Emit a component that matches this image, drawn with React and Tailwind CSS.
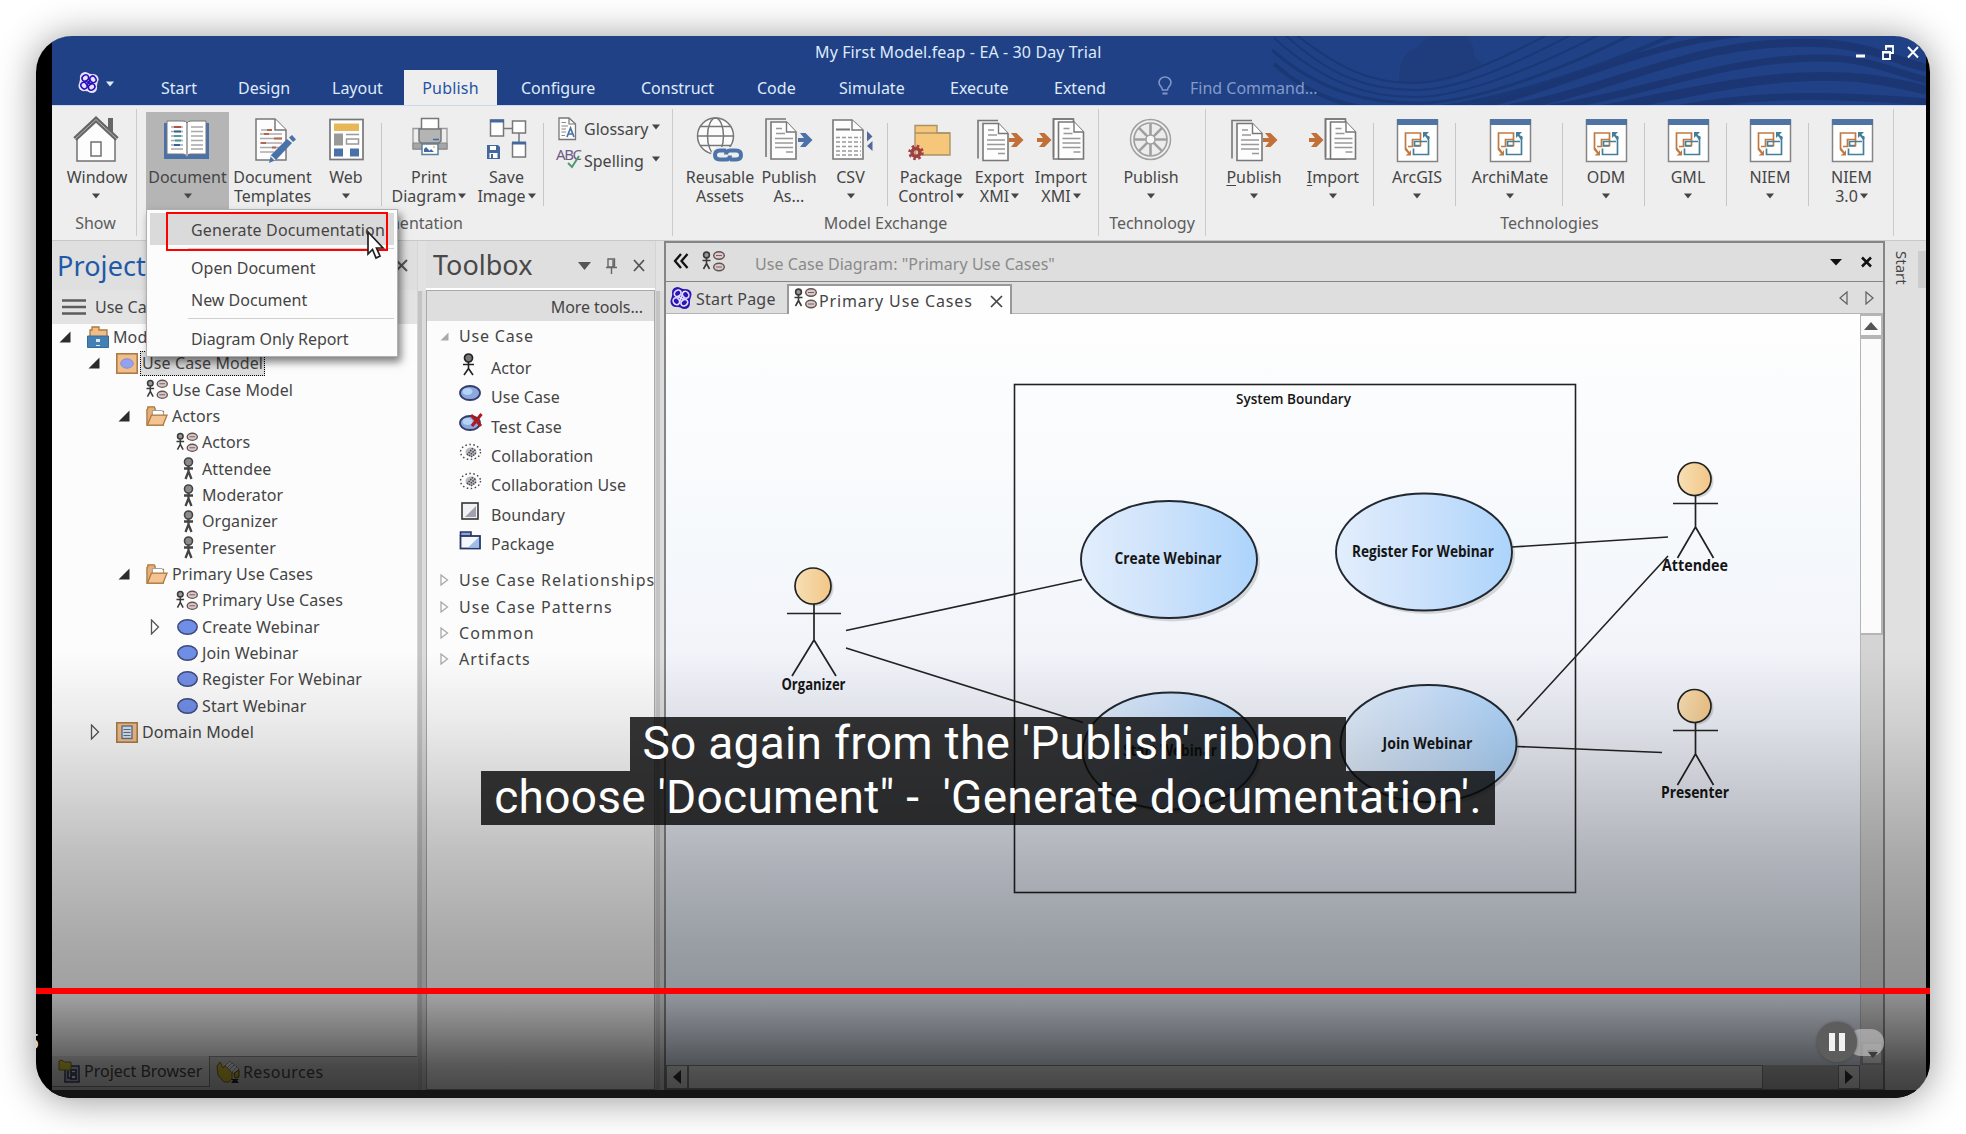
import React from "react";

/* ---------- small shared glyphs ---------- */

const Caret = ({ className = "" }) => (
  <svg className={className} width="8" height="6" viewBox="0 0 8 6">
    <path d="M0 0.5H8L4 5.5Z" fill="currentColor" />
  </svg>
);

const Logo = ({ size, fill, stroke }) => (
  <svg width={size} height={size} viewBox="0 0 24 24">
    <circle cx="8.500" cy="6.500" r="5.500" fill={fill} />
    <circle cx="17" cy="8.500" r="5.500" fill={fill} />
    <circle cx="15.500" cy="17.500" r="5.500" fill={fill} />
    <circle cx="7" cy="15.500" r="5.500" fill={fill} />
    <circle cx="12" cy="12" r="9.500" fill={fill} />
    <g fill="none" stroke={stroke} strokeWidth="1.600">
      <ellipse cx="8.700" cy="7.300" rx="3.600" ry="3" transform="rotate(-35 8.700 7.300)" />
      <ellipse cx="16.700" cy="8.700" rx="3" ry="3.600" transform="rotate(-35 16.700 8.700)" />
      <ellipse cx="15.300" cy="16.700" rx="3.600" ry="3" transform="rotate(-35 15.300 16.700)" />
      <ellipse cx="7.300" cy="15.300" rx="3" ry="3.600" transform="rotate(-35 7.300 15.300)" />
      <path d="M8 11C11 10 13 14 16 13M13 8C14 11 10 13 11 16" />
    </g>
  </svg>
);

const Icon = ({ children }) => (
  <svg width="48" height="48" viewBox="0 0 48 48" className="shrink-0 overflow-visible">
    {children}
  </svg>
);

/* ---------- ribbon icons (48 x 48 grid) ---------- */

const WindowIcon = () => (
  <Icon>
    <path d="M38.500 3V21" stroke="#666" strokeWidth="5" />
    <path d="M5 23L24 5L43 23V46H5Z" fill="#fdfdfd" stroke="#707070" strokeWidth="1.500" />
    <path d="M3 24L24 4.500L45 24" fill="none" stroke="#666" strokeWidth="5" />
    <path d="M3 24L24 4.500L45 24" fill="none" stroke="#b5b5b5" strokeWidth="1" />
    <rect x="19" y="27" width="10" height="14" fill="#fff" stroke="#707070" strokeWidth="1.500" />
  </Icon>
);

const BookIcon = () => (
  <Icon>
    <path d="M0 8H45V44H0Z" fill="#4a72a8" />
    <path d="M3 6H19Q22 6 23 8Q24 6 27 6H42V39H26Q23.500 39 23 42Q22 39 19 39H3Z" fill="#fff" stroke="#777" strokeWidth="1" />
    <path d="M23 8V41" stroke="#aaa" strokeWidth="2" />
    <path d="M7 12H19M7 21H19M7 34H19M27 12H39M27 16.500H39M27 21H39M27 25.500H39M27 30H39M27 34H39" stroke="#a8a8a8" strokeWidth="1.500" />
    <path d="M7 16.500H19M7 25.500H19M7 30H19" stroke="#9ab" strokeWidth="1.500" />
    <path d="M10 12H17" stroke="#b5523c" strokeWidth="2" />
    <path d="M10 16.500H17M10 30H16" stroke="#3e5f96" strokeWidth="2" />
    <path d="M10 21H17M11 25.500H17" stroke="#4f9a9a" strokeWidth="2" />
  </Icon>
);

const TemplateIcon = () => (
  <Icon>
    <g transform="translate(3 0)">
      <path d="M4 4H23L34 15V45H4Z" fill="#fdfdfd" stroke="#777" strokeWidth="1.500" />
      <path d="M23 4V15H34" fill="#fff" stroke="#777" strokeWidth="1.500" />
      <path d="M9 15H18M8 19H30M8 23.500H30M8 28H30M8 32.500H28M8 37H22" stroke="#aaa" strokeWidth="1.500" />
      <path d="M15 15H20M12 19H17M22 23.500H30M9 28H14M20 32.500H24" stroke="#b8654a" strokeWidth="1.800" />
      <path d="M17 48L19 40L35 24L40 28L24 45Z" fill="#4a72a8" />
      <path d="M37 22.500L40 20L44 24.500L41 27Z" fill="#4a72a8" />
      <path d="M19 41L23 45" stroke="#e6eefa" strokeWidth="1.500" />
    </g>
  </Icon>
);

const WebIcon = () => (
  <Icon>
    <rect x="8" y="4.500" width="33" height="40" fill="#fff" stroke="#777" strokeWidth="1.700" />
    <rect x="12" y="8.500" width="25" height="7.500" fill="#e8b757" />
    <rect x="12" y="18.500" width="9" height="12" fill="#999" />
    <path d="M24 19.500H37" stroke="#999" strokeWidth="1.500" />
    <rect x="24.500" y="24" width="12" height="5" fill="#fff" stroke="#999" strokeWidth="1.500" />
    <rect x="12" y="33.500" width="9" height="8" fill="#4a72a8" />
    <rect x="28" y="33.500" width="9" height="8" fill="#4a72a8" />
  </Icon>
);

const PrintIcon = () => (
  <Icon>
    <g transform="translate(1 0)">
      <path d="M7 13.500H41V34H7Z" fill="#ededed" stroke="#999" strokeWidth="1.300" />
      <path d="M7 28H41V34H7Z" fill="#a6a6a6" stroke="#888" />
      <rect x="15.500" y="3.500" width="17" height="11" fill="#fff" stroke="#777" strokeWidth="1.500" />
      <path d="M13 14H35V26L33 28H15L13 26Z" fill="#b4b4b4" stroke="#777" strokeWidth="1.500" />
      <path d="M27 24.500H33" stroke="#44699f" strokeWidth="1.500" />
      <rect x="16" y="29" width="16" height="10.500" fill="#fff" stroke="#5e8098" strokeWidth="1.500" />
      <path d="M18 37V34L20 32L25 37ZM25 34L28 37H23Z" fill="#44699f" />
      <circle cx="28" cy="32" r="1" fill="#e8b757" />
    </g>
  </Icon>
);

const SaveImageIcon = () => (
  <Icon>
    <path d="M21 13.500H31M36 18V28" stroke="#777" strokeWidth="1.500" fill="none" />
    <rect x="7.500" y="5" width="13" height="16" fill="#fff" stroke="#777" strokeWidth="1.500" />
    <path d="M7 6H21" stroke="#44699f" strokeWidth="3" />
    <rect x="29.500" y="6" width="13" height="12" fill="#fff" stroke="#777" strokeWidth="1.500" />
    <rect x="29.500" y="28" width="13" height="14" fill="#fff" stroke="#777" strokeWidth="1.500" />
    <path d="M29 28H43" stroke="#44699f" strokeWidth="3" />
    <path d="M4 30H15L17 32V44H4Z" fill="#44699f" />
    <rect x="7" y="31" width="6" height="4" fill="#fff" />
    <rect x="6.500" y="38" width="8" height="5" fill="#fff" />
    <rect x="8" y="39" width="2" height="4" fill="#44699f" />
  </Icon>
);

const GlobeIcon = () => (
  <Icon>
    <g fill="none" stroke="#777" strokeWidth="1.500">
      <circle cx="19.500" cy="21" r="18" fill="#fbfbfb" />
      <ellipse cx="19.500" cy="21" rx="8" ry="18" />
      <path d="M1.500 21H37.500M4.500 11.500H34.500M4.500 30.500H34.500" />
    </g>
    <rect x="15" y="32" width="34" height="16" rx="8" fill="#eee" />
    <g fill="none" stroke="#4c74a9" strokeWidth="4">
      <path d="M30 35.500H24Q19 35.500 19 40T24 44.500H30Q34 44.500 34 40.500" />
      <path d="M34 44.500H40Q45 44.500 45 40T40 35.500H34Q30 35.500 30 39.500" />
    </g>
  </Icon>
);

const PagesArt = () => (
  <g>
    <path d="M1 41V3H21" fill="none" stroke="#777" strokeWidth="1.600" />
    <path d="M6 6H21.500L31 16V43H6Z" fill="#fdfdfd" stroke="#777" strokeWidth="1.600" />
    <path d="M21.500 6V16H31" fill="#fff" stroke="#777" strokeWidth="1.400" />
    <path d="M11 12.500H17M11 17.500H20M10 22.500H28M10 27H28M10 31.500H28M21 36H28" stroke="#999" strokeWidth="1.500" />
  </g>
);

const Arrow = ({ fill }) => (
  <path d="M0 5H6L2 0H7.500L14.500 7L7.500 14H2L6 9H0Z" fill={fill} />
);

const PublishAsIcon = () => (
  <Icon>
    <g transform="translate(0 1)"><PagesArt /></g>
    <g transform="translate(33 18)"><Arrow fill="#4a72a8" /></g>
  </Icon>
);

const ExportIcon = () => (
  <Icon>
    <g transform="translate(1 2.500)"><PagesArt /></g>
    <g transform="translate(33 18)"><Arrow fill="#c2703a" /></g>
  </Icon>
);

const ImportIcon = () => (
  <Icon>
    <g transform="translate(0 18)"><Arrow fill="#c2703a" /></g>
    <g transform="translate(15.500 1)">
      <path d="M1 43V3H21V43Z" fill="#fdfdfd" stroke="#777" strokeWidth="1.600" />
      <PagesArt />
    </g>
  </Icon>
);

const CsvIcon = () => (
  <Icon>
    <g transform="translate(1 0)">
      <path d="M5 5H24L35 15V44H5Z" fill="#fdfdfd" stroke="#777" strokeWidth="1.600" />
      <path d="M24 5V15H35" fill="#fff" stroke="#777" strokeWidth="1.400" />
      <path d="M8 14.500H22" stroke="#777" strokeWidth="1.800" />
      <path d="M8 22.500H33M8 27H33M8 31.500H33M8 36H33M8 40H33" stroke="#999" strokeWidth="1.500" strokeDasharray="4 2" />
      <path d="M39 16L44.500 21.500L39 26.500ZM44.500 26V36L39 31Z" fill="#52699b" />
    </g>
  </Icon>
);

const PackageIcon = () => (
  <Icon>
    <path d="M8 40V10.500H30V18H43V40Z" fill="#f6c67a" stroke="#a89468" strokeWidth="1.400" />
    <path d="M8 18H43" stroke="#a89468" strokeWidth="1.400" />
    <circle cx="9" cy="37.500" r="4" fill="none" stroke="#a04045" strokeWidth="3.500" />
    <circle cx="9" cy="37.500" r="6.500" fill="none" stroke="#a04045" strokeWidth="2.500" strokeDasharray="2.550 2.550" />
  </Icon>
);

const WheelIcon = () => (
  <Icon>
    <circle cx="23.500" cy="24.500" r="20" fill="#efefef" stroke="#a0a0a0" strokeWidth="1.500" />
    <circle cx="23.500" cy="24.500" r="16.500" fill="#ececec" stroke="#a0a0a0" strokeWidth="1.700" />
    <path d="M23.500 8.500V40.500M7.500 24.500H39.500M12.200 13.200L34.800 35.800M34.800 13.200L12.200 35.800" stroke="#a0a0a0" strokeWidth="2.600" />
    <circle cx="23.500" cy="24.500" r="4.500" fill="#f6f6f6" stroke="#a0a0a0" strokeWidth="1.500" />
  </Icon>
);

const TechIcon = () => (
  <Icon>
    <rect x="4.500" y="5" width="40" height="41.500" fill="#fff" stroke="#858585" strokeWidth="1.500" />
    <path d="M4 4H45V10H4Z" fill="#4f74a3" />
    <path d="M12.500 34V18H27.500V24M15 31.500H19.500V24.500H27.500V30.500H21.500" fill="none" stroke="#c07a41" strokeWidth="1.700" />
    <path d="M35.500 21V39.500H20.500V33.500M34 26.500H21.500V31H27.500" fill="none" stroke="#437f9b" strokeWidth="1.700" />
    <path d="M36 17H30V23L32 21L35 25L37 23L33.500 19.500Z" fill="#437f9b" />
    <path d="M12.500 40.500H18V35L16.500 37L13.500 33L11.500 34.500L15 38.500Z" fill="#c07a41" />
  </Icon>
);

const GlossaryIcon = () => (
  <svg width="19" height="24" viewBox="0 0 19 24">
    <path d="M1 1H11L17.500 7V22.500H1Z" fill="#fdfdfd" stroke="#777" strokeWidth="1.300" />
    <path d="M11 1V7H17.500" fill="none" stroke="#777" strokeWidth="1.200" />
    <path d="M3.500 5.500H8M3.500 9H10M3.500 12H8M3.500 15H8M3.500 18.500H7" stroke="#888" strokeWidth="1.200" />
    <path d="M9 20L12.500 11L16 20M10 17H15" fill="none" stroke="#4a72a8" strokeWidth="1.700" />
  </svg>
);

/* ---------- ribbon building blocks ---------- */

const Item = ({ icon, a, b, caret, w, active, underline }) => (
  <div className={`flex h-[103px] shrink-0 flex-col items-center pt-[3px] ${w} ${active ? "bg-[#b5b5b5]" : ""}`}>
    {icon}
    <div className="mt-[5px] whitespace-nowrap text-center leading-[19px]">
      {underline ? <span><span className="underline underline-offset-2">{a[0]}</span>{a.slice(1)}</span> : a}
    </div>
    <div className="flex h-[19px] items-center whitespace-nowrap leading-[19px]">
      {b}
      {caret && <Caret className={b ? "mb-[2px] ml-[2px]" : "mb-px"} />}
    </div>
  </div>
);

const Sep = () => <div className="mt-[11px] h-[83px] w-px shrink-0 bg-[#c6c6c6]" />;

const Group = ({ w, pl = "", label, children }) => (
  <div className={`mt-[3px] flex h-[127px] shrink-0 flex-col border-r border-[#cbcbcb] ${w}`}>
    <div className={`flex pt-[3px] ${pl}`}>{children}</div>
    <div className="-mt-[2px] text-center leading-[20px] text-[#5c5c5c]">{label}</div>
  </div>
);

const Ribbon = () => (
  <div className="flex h-[136px] border-b border-t border-b-[#c8c8c8] border-t-[#c9d8f5] bg-[#eeeeee] text-[#454545]">
    <Group w="w-[85px]" label={<span className="pl-[3px]">Show</span>}>
      <Item w="w-[88px]" icon={<WindowIcon />} a={<span className="pl-[2px]">Window</span>} caret />
    </Group>
    <Group w="w-[536px]" pl="pl-[9px]" label="Documentation">
      <Item w="w-[83px]" icon={<BookIcon />} a="Document" caret active />
      <Item w="w-[87px]" icon={<TemplateIcon />} a="Document" b="Templates" />
      <Item w="w-[60px]" icon={<WebIcon />} a="Web" caret />
      <div className="w-[5px]" />
      <Sep />
      <Item w="w-[94px]" icon={<PrintIcon />} a="Print" b="Diagram" caret />
      <Item w="w-[61px]" icon={<SaveImageIcon />} a="Save" b="Image" caret />
      <div className="w-[6px]" />
      <Sep />
      <div className="flex w-[120px] flex-col pl-[12px]">
        <div className="flex h-[33px] items-center">
          <div className="w-[28px] pl-[2px]"><GlossaryIcon /></div>
          <span className="w-[66px]">Glossary</span>
          <Caret className="mb-[4px] ml-[2px]" />
        </div>
        <div className="flex h-[31px] items-center">
          <div className="relative w-[28px] text-[15px] leading-[15px] tracking-[-1.400px] text-[#6f5c86]">
            <span className="relative -top-[6px]">ABC</span>
            <svg className="absolute left-[11px] top-[2px]" width="14" height="14" viewBox="0 0 14 14">
              <path d="M1 8L5 12L12 1" fill="none" stroke="#4d9a72" strokeWidth="2" />
            </svg>
          </div>
          <span className="w-[66px]">Spelling</span>
          <Caret className="mb-[4px] ml-[2px]" />
        </div>
      </div>
    </Group>
    <Group w="w-[426px]" pl="pl-[3px]" label="Model Exchange">
      <Item w="w-[88px]" icon={<GlobeIcon />} a="Reusable" b="Assets" />
      <Item w="w-[50px]" icon={<PublishAsIcon />} a="Publish" b="As..." />
      <Item w="w-[73px]" icon={<CsvIcon />} a="CSV" caret />
      <Sep />
      <Item w="w-[86px]" icon={<PackageIcon />} a="Package" b="Control" caret />
      <Item w="w-[51px]" icon={<ExportIcon />} a="Export" b="XMI" caret />
      <Item w="w-[72px]" icon={<ImportIcon />} a="Import" b="XMI" caret />
    </Group>
    <Group w="w-[107px]" label="Technology">
      <Item w="w-[104px]" icon={<WheelIcon />} a="Publish" caret />
    </Group>
    <Group w="w-[688px]" pl="pl-[8px]" label="Technologies">
      <Item w="w-[80px]" icon={<ExportIcon />} a="Publish" caret underline />
      <Item w="w-[78px]" icon={<ImportIcon />} a="Import" caret underline />
      <div className="w-px" />
      <Sep />
      <Item w="w-[81px] pl-[5px]" icon={<TechIcon />} a="ArcGIS" caret />
      <Sep />
      <Item w="w-[106px] pl-[2px]" icon={<TechIcon />} a="ArchiMate" caret />
      <Sep />
      <Item w="w-[81px] pl-[5px]" icon={<TechIcon />} a="ODM" caret />
      <Sep />
      <Item w="w-[81px] pl-[5px]" icon={<TechIcon />} a="GML" caret />
      <Sep />
      <Item w="w-[81px] pl-[5px]" icon={<TechIcon />} a="NIEM" caret />
      <Sep />
      <Item w="w-[84px] pl-[1px]" icon={<TechIcon />} a="NIEM" b="3.0" caret />
    </Group>
  </div>
);

/* ---------- title bar and ribbon tabs ---------- */

const tabs = [
  ["Start", "w-[77px]"],
  ["Design", "w-[94px]"],
  ["Layout", "w-[72px]"],
];
const tabsAfter = [
  ["Configure", "w-[120px]"],
  ["Construct", "w-[116px]"],
  ["Code", "w-[82px]"],
  ["Simulate", "w-[111px]"],
  ["Execute", "w-[104px]"],
  ["Extend", "w-[104px]"],
];

const Waves = () => (
  <svg className="absolute right-0 top-0" width="690" height="69" viewBox="1236 36 690 69">
    <path d="M1399 82C1399 66 1404 50 1416 48C1422 44 1425 36 1436 36H1466C1472 40 1474 50 1474 56C1478 60 1482 62 1482 66C1460 80 1430 86 1399 82Z" fill="#1f3c7c" />
    <g fill="none" stroke="#1b3876" strokeWidth="2">
      <path d="M1290 30C1340 70 1370 82 1410 83S1500 60 1556 30" />
      <path d="M1280 30C1330 78 1370 90 1415 90S1520 62 1580 30" />
      <path d="M1274 38C1325 84 1370 98 1418 97S1540 66 1608 30" />
      <path d="M1272 50C1320 92 1370 104 1422 103S1560 72 1640 30" strokeWidth="3" />
      <path d="M1274 64C1310 96 1350 112 1410 110S1580 78 1680 32" strokeWidth="4" />
    </g>
    <g fill="none" stroke="#1b3673" strokeWidth="6">
      <path d="M1470 108C1560 90 1640 44 1740 34" />
      <path d="M1510 108C1600 92 1680 50 1770 44S1880 56 1926 68" strokeWidth="8" />
      <path d="M1550 108C1640 94 1700 68 1780 60S1880 68 1926 80" strokeWidth="7" />
      <path d="M1600 110C1680 94 1740 80 1800 77S1890 82 1926 90" strokeWidth="9" />
      <path d="M1660 112C1740 96 1800 92 1926 102" strokeWidth="7" />
    </g>
  </svg>
);

const TitleBar = () => (
  <div className="relative h-[69px] bg-[#204186] text-[#dfeafb]">
    <Waves />
    <div className="relative flex h-[34px] items-center">
      <div className="w-[763px]" />
      <div className="w-[1040px] leading-[34px] tracking-[0.120px]"><span className="relative -top-px">My First Model.feap - EA - 30 Day Trial</span></div>
      <div className="flex items-center text-white">
        <svg width="66" height="16" viewBox="0 0 66 16" className="-mt-[3px]">
          <path d="M1 12H10" stroke="#fff" strokeWidth="3" />
          <path d="M31 6V2H38V9H35M30 2.500H38" fill="none" stroke="#fff" strokeWidth="1.800" />
          <path d="M28 8H35V15H28ZM27 8.500H36" fill="none" stroke="#fff" strokeWidth="1.800" />
          <path d="M53 3L63 13.500M63 3L53 13.500" stroke="#fff" strokeWidth="2" />
        </svg>
      </div>
    </div>
    <div className="relative flex h-[35px] items-center leading-[36px]">
      <div className="flex w-[109px] items-center pl-[25px]">
        <div className="-mt-[10px]"><Logo size={23} fill="#e8e2ff" stroke="#2a10b8" /></div>
        <Caret className="-mt-[8px] ml-[6px]" />
      </div>
      {tabs.map(([t, w]) => <div key={t} className={`${w} shrink-0`}>{t}</div>)}
      <div className="flex h-[35px] w-[93px] items-center justify-center bg-[#eeeeee] text-[#1f55a5]">
        <span className="tracking-[0.2px]">Publish</span>
      </div>
      <div className="w-[24px]" />
      {tabsAfter.map(([t, w]) => <div key={t} className={`${w} shrink-0`}>{t}</div>)}
      <svg width="14" height="20" viewBox="0 0 14 20" className="-mt-[4px]">
        <path d="M4.500 14C4.500 11 1 10 1 6.500A6 5.500 0 0 1 13 6.500C13 10 9.500 11 9.500 14Z" fill="none" stroke="#7f97c8" strokeWidth="1.600" />
        <path d="M4.500 17.500H9.500" stroke="#7f97c8" strokeWidth="2" />
      </svg>
      <span className="ml-[18px] text-[#829bca]">Find Command...</span>
    </div>
  </div>
);

/* ---------- project tree ---------- */

const Person = ({ x = 0 }) => (
  <g transform={`translate(${x} 0)`} stroke="#444" fill="none">
    <path d="M5.500 9V15M1 11.500H10M5.500 14.500L2.500 22M5.500 14.500L8.500 22" strokeWidth="2.300" />
    <circle cx="5.500" cy="5" r="4" fill="#8b8b8b" strokeWidth="1.600" />
  </g>
);

const DiagramGlyph = () => (
  <svg width="23" height="21" viewBox="0 0 23 21">
    <g stroke="#3a3a3a" fill="none" strokeWidth="1.600">
      <path d="M4.500 7V13M0.500 9.500H8.500M4.500 12.500L1.500 18M4.500 12.500L7.500 18" />
      <circle cx="4.500" cy="4" r="2.900" fill="#999" />
      <ellipse cx="17" cy="4.500" rx="5.300" ry="3.700" fill="#dcc8c8" stroke="#5e5252" strokeWidth="1.400" />
      <ellipse cx="17" cy="16" rx="5.300" ry="3.700" fill="#dcc8c8" stroke="#5e5252" strokeWidth="1.400" />
      <path d="M14 4.500H20M14 16H20" stroke="#7a6262" strokeWidth="1.200" />
    </g>
  </svg>
);

const FolderGlyph = () => (
  <svg width="24" height="22" viewBox="0 0 24 22">
    <path d="M1 21V4L2 3V1H9L10 3V6H19V21Z" fill="#e6ae78" stroke="#a9793f" strokeWidth="1.400" />
    <path d="M7 12V5H17L19 7V12Z" fill="#fff" stroke="#999" strokeWidth="1" />
    <path d="M1.500 21L6 10H23L18.500 21Z" fill="#f4c391" stroke="#a9793f" strokeWidth="1.400" />
  </svg>
);

const RootGlyph = () => (
  <svg width="22" height="22" viewBox="0 0 22 22">
    <path d="M3 11V4H5V1H12V4H20V11Z" fill="#efbd85" stroke="#a9793f" strokeWidth="1.300" />
    <path d="M0.500 10H21.500V21.500H0.500Z" fill="#4480b4" stroke="#356a9b" />
    <path d="M9 13H13V16H9Z" fill="#dbe9f5" />
    <path d="M9 19.500H13" stroke="#dbe9f5" />
  </svg>
);

const PackageView = ({ doc }) => (
  <svg width="22" height="21" viewBox="0 0 22 21">
    <rect x="0.800" y="0.800" width="20.400" height="19.400" fill="#f2bd8b" stroke="#aa7c48" strokeWidth="1.600" />
    {doc ? (
      <g><rect x="6" y="4" width="10" height="12.500" fill="#d5e2ee" stroke="#5b6f88" strokeWidth="1.300" /><path d="M7.500 7.500H14.500M7.500 10.500H14.500M7.500 13.500H14.500" stroke="#5b6f88" /></g>
    ) : (
      <ellipse cx="11" cy="10.500" rx="6.300" ry="4.700" fill="#93a2ee" stroke="#8290cc" />
    )}
  </svg>
);

const Oval = () => (
  <svg width="21" height="16" viewBox="0 0 21 16">
    <ellipse cx="10.500" cy="8" rx="9.700" ry="7.200" fill="#718ee6" stroke="#3d4a7c" strokeWidth="1.500" />
  </svg>
);

const ActorGlyph = () => (
  <svg width="21" height="23" viewBox="0 0 21 23"><Person x={6} /></svg>
);

const Open = () => (
  <svg width="12" height="12" viewBox="0 0 12 12"><path d="M11.500 0.500V11.500H0.500Z" fill="#2c2c2c" /></svg>
);
const Closed = () => (
  <svg width="10" height="16" viewBox="0 0 10 16" className="ml-[2px]"><path d="M1.500 1L8.500 8L1.500 15Z" fill="#fff" stroke="#555" strokeWidth="1.300" /></svg>
);

const glyphs = {
  root: <RootGlyph />,
  view: <PackageView />,
  doc: <PackageView doc />,
  diagram: <DiagramGlyph />,
  folder: <FolderGlyph />,
  actor: <ActorGlyph />,
  oval: <Oval />,
};

const indents = ["pl-[7px]", "pl-[36px]", "pl-[66px]", "pl-[96px]"];

const tree = [
  [0, "root", "Model", "open"],
  [1, "view", "Use Case Model", "open", true],
  [2, "diagram", "Use Case Model"],
  [2, "folder", "Actors", "open"],
  [3, "diagram", "Actors"],
  [3, "actor", "Attendee"],
  [3, "actor", "Moderator"],
  [3, "actor", "Organizer"],
  [3, "actor", "Presenter"],
  [2, "folder", "Primary Use Cases", "open"],
  [3, "diagram", "Primary Use Cases"],
  [3, "oval", "Create Webinar", "closed"],
  [3, "oval", "Join Webinar"],
  [3, "oval", "Register For Webinar"],
  [3, "oval", "Start Webinar"],
  [1, "doc", "Domain Model", "closed"],
];

const ProjectPanel = () => (
  <div className="flex w-[365px] shrink-0 flex-col bg-[#fcfcfc]">
    <div className="flex h-[49px] items-center bg-[#dfdfdf] pl-[5px]">
      <span className="w-[338px] text-[27px] leading-[48px] tracking-[0.1px] text-[#2159a8]">Project Browser</span>
      <svg width="13" height="13" viewBox="0 0 13 13"><path d="M1 1L12 12M12 1L1 12" stroke="#555" strokeWidth="2" /></svg>
    </div>
    <div className="flex h-[34px] items-center bg-[#e3e3e3] pl-[10px]">
      <svg width="24" height="16" viewBox="0 0 24 16"><path d="M0 1.500H24M0 8H24M0 14.500H24" stroke="#5c5c5c" strokeWidth="2.500" /></svg>
      <span className="ml-[9px] w-[242px]">Use Case Model</span>
      <svg width="20" height="20" viewBox="0 0 20 20"><path d="M10 0H14V10H20L12 19L4 10H10Z" fill="#1f5a45" /></svg>
    </div>
    <div className="flex flex-1 flex-col">
      {tree.map(([lvl, g, text, state, sel], i) => (
        <div key={i} className={`flex h-[26.330px] shrink-0 items-center ${indents[lvl]}`}>
          <div className="flex w-[16px] shrink-0 justify-start">
            {state === "open" && <Open />}
            {state === "closed" && <Closed />}
          </div>
          <div className="ml-[12px] flex w-[22px] shrink-0 justify-center">{glyphs[g]}</div>
          <span className={sel ? "ml-[2px] border border-dotted border-black bg-[#dcdcdc] px-px leading-[23px] tracking-[0.100px]" : "ml-[4px] leading-[26px] tracking-[0.100px]"}>{text}</span>
        </div>
      ))}
    </div>
    <div className="flex h-[34px] shrink-0 bg-[#d2d2d2]">
      <div className="flex h-[31px] w-[158px] items-center border-b border-r border-[#888] bg-[#e4e4e4] pl-[6px]">
        <svg width="23" height="24" viewBox="0 0 23 24">
          <rect x="7" y="7" width="14" height="16" fill="#b9bfd8" stroke="#3c4266" strokeWidth="1.500" />
          <path d="M10 12V19H13M13 11H18V14H13ZM13 16H18V20H13Z" fill="#fff" stroke="#2c3152" strokeWidth="1.500" />
          <path d="M1 2L4 1L6 3H13V11H1Z" fill="#d9cf3c" stroke="#7a7420" />
        </svg>
        <span className="ml-[3px]">Project Browser</span>
      </div>
      <div className="flex h-[31px] flex-1 items-center border-t border-[#999] pl-[6px]">
        <svg width="25" height="24" viewBox="0 0 25 24">
          <path d="M1 6L4 2L7 8L9 6L16 12V19L13 22H8L2 15Z" fill="#d8c22e" stroke="#75691c" />
          <path d="M9 6L14 1L23 9L18 14Z" fill="#f2f2f2" stroke="#777" strokeDasharray="2 1" />
          <path d="M11 8L16 3M13 10L18 5M16 12L21 7" stroke="#999" />
          <path d="M18 13L23 10V17L19 18Z" fill="#c9b42c" stroke="#5c521b" />
          <path d="M15 19H23L21 20.500L23 23H15L17 20.500Z" fill="#222" />
        </svg>
        <span className="ml-[2px] tracking-[0.400px]">Resources</span>
      </div>
    </div>
  </div>
);

/* ---------- toolbox ---------- */

const BlueOval = ({ cross }) => (
  <svg width="23" height="22" viewBox="0 0 23 22" className="-mt-[3px] overflow-visible">
    <ellipse cx="11" cy="11" rx="10" ry="7" fill="#8ca8e0" stroke="#343c6a" strokeWidth="1.800" />
    <ellipse cx="8.500" cy="9.500" rx="5" ry="3.500" fill="#b5d3f2" />
    {cross && <path d="M12 3L22 14M22.500 2L13 14" stroke="#b0181c" strokeWidth="3" />}
  </svg>
);

const Collab = () => (
  <svg width="23" height="22" viewBox="0 0 23 22" className="-mt-[2px]">
    <ellipse cx="11.500" cy="10" rx="10" ry="7.500" fill="none" stroke="#444" strokeWidth="1.400" strokeDasharray="1.500 2.500" />
    <ellipse cx="12" cy="10" rx="5.500" ry="4.500" fill="#b9b9c2" />
    <path d="M8 13L14 6M10 14L17 7M12 15L17 11" stroke="#444" strokeWidth="1.500" strokeDasharray="1.500 1" />
  </svg>
);

const toolItems = [
  ["Actor", <svg width="23" height="23" viewBox="0 0 23 23" key="a" className="-mt-[3px]"><g stroke="#222" fill="none"><path d="M9.500 9V16M4 11.500H15M9.500 15.500L5 22M9.500 15.500L14 22" strokeWidth="1.600" /><circle cx="9.500" cy="5" r="4" fill="#777" strokeWidth="1.700" /></g></svg>],
  ["Use Case", <BlueOval key="b" />],
  ["Test Case", <BlueOval cross key="c" />],
  ["Collaboration", <Collab key="d" />],
  ["Collaboration Use", <Collab key="e" />],
  ["Boundary", <svg width="23" height="22" viewBox="0 0 23 22" key="f" className="-mt-px"><rect x="3" y="2" width="16" height="16" fill="#f2f2f4" stroke="#333" strokeWidth="1.600" /><path d="M17 5V16H6Z" fill="#a2a2ae" /></svg>],
  ["Package", <svg width="23" height="22" viewBox="0 0 23 22" key="g" className="-mt-px"><path d="M1.500 6V2H12V6" fill="#8ba6d5" stroke="#2a3665" strokeWidth="1.600" /><rect x="1.500" y="6" width="19.500" height="12.500" fill="#f4f8fe" stroke="#2a3665" strokeWidth="1.800" /><path d="M20 7V17.500H9Z" fill="#9dbdec" /></svg>],
];

const Toolbox = () => (
  <div className="flex w-[229px] shrink-0 flex-col border-b border-[#999] bg-[#dfdfdf]">
    <div className="flex h-[47px] shrink-0 items-center pl-[7px]">
      <span className="w-[144px] text-[27px] leading-[46px] text-[#484848]">Toolbox</span>
      <svg width="70" height="16" viewBox="0 0 70 16" className="mt-[2px]">
        <path d="M1 4H14L7.500 12Z" fill="#555" />
        <path d="M31 1H37.500V9H31ZM29 9.500H40M34.500 10V16M36 2V9" fill="none" stroke="#666" strokeWidth="1.400" />
        <path d="M57 2L67 13M67 2L57 13" stroke="#555" strokeWidth="1.800" />
      </svg>
    </div>
    <div className="h-[2px] shrink-0 bg-white" />
    <div className="flex flex-1 flex-col border border-b-0 border-[#a9a9a9] bg-[#fcfcfc]">
      <div className="h-[30px] shrink-0 bg-[#dedede] pr-[11px] text-right leading-[32px] tracking-[-0.100px]">More tools...</div>
      <div className="flex h-[30px] shrink-0 items-center pl-[13px]">
        <svg width="9" height="9" viewBox="0 0 9 9"><path d="M8.500 0.500V8.500H0.500Z" fill="#aaa" /></svg>
        <span className="ml-[10px] tracking-[0.800px] leading-[28px]">Use Case</span>
      </div>
      {toolItems.map(([t, g]) => (
        <div key={t} className="flex h-[29.300px] shrink-0 items-center pl-[32px]">
          {g}
          <span className="ml-[9px] pt-[5px] leading-[24px] tracking-[0.080px]">{t}</span>
        </div>
      ))}
      <div className="h-[11px] shrink-0" />
      {["Use Case Relationships", "Use Case Patterns", "Common", "Artifacts"].map((t) => (
        <div key={t} className="flex h-[26.300px] shrink-0 items-center overflow-hidden pl-[13px]">
          <svg className="shrink-0" width="9" height="12" viewBox="0 0 9 12"><path d="M1 1L7.500 6L1 11Z" fill="none" stroke="#aaa" strokeWidth="1.300" /></svg>
          <span className="ml-[10px] whitespace-nowrap leading-[26px] tracking-[1.050px]">{t}</span>
        </div>
      ))}
    </div>
  </div>
);

/* ---------- diagram ---------- */

const Label = ({ x, y, w, size = 16, weight = 700, children }) => (
  <text x={x} y={y} fontSize={size} fontWeight={weight} textLength={w} lengthAdjust="spacingAndGlyphs" textAnchor="middle" fill="#151515" fontFamily="'Open Sans', 'Noto Sans', sans-serif">
    {children}
  </text>
);

const UseCase = ({ cx, cy, w, label, ly }) => (
  <g>
    <ellipse cx={cx + 3} cy={cy + 3} rx="88" ry="59" fill="#000" opacity="0.130" />
    <ellipse cx={cx} cy={cy} rx="88" ry="58.500" fill="url(#uc)" stroke="#222831" strokeWidth="1.900" />
    <Label x={cx - 1} y={ly} w={w}>{label}</Label>
  </g>
);

const Actor = ({ x, top, r, arm, bodyTop, armY, hip, foot, leg, label, w, ly }) => (
  <g stroke="#222" strokeWidth="1.700" fill="none">
    <circle cx={x + 1.500} cy={top + r + 2} r={r} fill="#000" opacity="0.150" stroke="none" />
    <circle cx={x - 1} cy={top + r} r={r} fill="url(#head)" />
    <path d={`M${x} ${bodyTop}V${hip}M${x - arm} ${armY}H${x + arm}M${x} ${hip}L${x - leg} ${foot}M${x} ${hip}L${x + leg} ${foot}`} />
    <g stroke="none"><Label x={x - 0.500} y={ly} w={w}>{label}</Label></g>
  </g>
);

const Diagram = () => (
  <svg className="block" width="1194" height="751" viewBox="666 314 1194 751">
    <defs>
      <linearGradient id="bg" x1="0" y1="0" x2="0" y2="1">
        <stop offset="0" stopColor="#fefefe" />
        <stop offset="0.300" stopColor="#f6f9fc" />
        <stop offset="0.500" stopColor="#f0f2f9" />
        <stop offset="1" stopColor="#e0e8f4" />
      </linearGradient>
      <linearGradient id="uc"><stop offset="0" stopColor="#e2eefc" /><stop offset="0.500" stopColor="#cbe1fb" /><stop offset="1" stopColor="#acd4fb" /></linearGradient>
      <linearGradient id="head"><stop offset="0" stopColor="#f7dfb4" /><stop offset="1" stopColor="#f2c687" /></linearGradient>
    </defs>
    <rect x="666" y="314" width="1194" height="751" fill="url(#bg)" />
    <rect x="1014.500" y="384.500" width="561" height="508" fill="none" stroke="#222" strokeWidth="1.600" />
    <Label x={1293.500} y={404} w={115} size={14} weight={600}>System Boundary</Label>
    <path d="M846 630.500L1082 579.500M846 648L1083 722.500M1512 547L1668 537M1668 556L1517 720.500M1517 746.500L1662 752.500" stroke="#222" strokeWidth="1.600" fill="none" />
    <UseCase cx={1169} cy={559.500} w={107} label="Create Webinar" ly={564} />
    <UseCase cx={1424} cy={552} w={142} label="Register For Webinar" ly={556.500} />
    <UseCase cx={1171} cy={751} w={94} label="Start Webinar" ly={755.500} />
    <UseCase cx={1428.500} cy={743.500} w={90} label="Join Webinar" ly={748.500} />
    <Actor x={814} top={568} r={18} arm={27} bodyTop={604} armY={613.500} hip={640} foot={676} leg={22} label="Organizer" w={64} ly={690} />
    <Actor x={1695.500} top={462.500} r={16.500} arm={22.500} bodyTop={496} armY={503.500} hip={527} foot={558} leg={18} label="Attendee" w={66} ly={571} />
    <Actor x={1695.500} top={689.500} r={16.500} arm={22.500} bodyTop={723} armY={730.500} hip={754} foot={785} leg={18} label="Presenter" w={68} ly={798} />
  </svg>
);

const DiagramPanel = () => (
  <div className="flex w-[1221px] shrink-0 flex-col border-b border-l-2 border-r-2 border-t-2 border-[#858585] bg-[#dedede]">
    <div className="flex h-[39px] shrink-0 items-center border-b border-[#858585]">
      <svg className="ml-[7px] -mt-[2px]" width="16" height="16" viewBox="0 0 16 16"><path d="M8 1L2 8L8 15M14.500 1L8.500 8L14.500 15" fill="none" stroke="#111" strokeWidth="2.300" /></svg>
      <div className="ml-[13px] w-[53px] pb-[2px]"><DiagramGlyph /></div>
      <span className="w-[1075px] pt-[4px] tracking-[0.050px] text-[#8a8a8a]">Use Case Diagram: "Primary Use Cases"</span>
      <svg width="42" height="16" viewBox="0 0 42 16">
        <path d="M0 5H12L6 11.500Z" fill="#111" />
        <path d="M32 3.500L41 12.500M41 3.500L32 12.500" stroke="#111" strokeWidth="2.500" />
      </svg>
    </div>
    <div className="flex h-[32px] shrink-0 items-end">
      <div className="flex h-full w-[121px] items-center border-b border-[#b4b4b4] pl-[3px]">
        <Logo size={24} fill="#2a14b4" stroke="#e4dfff" />
        <span className="ml-[3px] pt-[3px] tracking-[0.200px]">Start Page</span>
      </div>
      <div className="flex h-[30px] w-[225px] items-center border-l-2 border-r-2 border-t-2 border-[#999] bg-[#fefefe] pl-[5px]">
        <div className="-mt-[3px]"><DiagramGlyph /></div>
        <span className="ml-[2px] pt-[2px] tracking-[0.850px]">Primary Use Cases</span>
        <svg className="ml-[17px] mt-[2px]" width="13" height="13" viewBox="0 0 13 13"><path d="M1 1L12 12M12 1L1 12" stroke="#444" strokeWidth="1.700" /></svg>
      </div>
      <div className="flex h-full flex-1 items-center justify-end border-b border-[#b4b4b4] pr-[8px]">
        <svg width="36" height="14" viewBox="0 0 36 14"><path d="M8 1V13L1 7ZM27 1V13L34 7Z" fill="none" stroke="#666" strokeWidth="1.300" /></svg>
      </div>
    </div>
    <div className="flex h-[751px] shrink-0">
      <Diagram />
      <div className="flex flex-1 flex-col border-l border-[#b5b5b5] bg-[#d4d4d4]">
        <div className="flex h-[23px] items-center justify-center border-2 border-l-0 border-[#b5b5b5] bg-[#fbfbfb]">
          <svg width="14" height="8" viewBox="0 0 14 8"><path d="M7 0L14 8H0Z" fill="#555" /></svg>
        </div>
        <div className="h-[298px] border-2 border-l-0 border-[#b5b5b5] bg-[#fbfbfb]" />
        <div className="flex-1" />
        <div className="flex h-[23px] items-center justify-center border-2 border-[#b5b5b5] bg-[#fbfbfb]">
          <svg width="10" height="7" viewBox="0 0 10 7"><path d="M0 0H10L5 7Z" fill="#444" /></svg>
        </div>
      </div>
    </div>
    <div className="flex flex-1 bg-[#bdbdbd]">
      <div className="flex w-[22px] items-center justify-center border border-[#909090] bg-[#eee]">
        <svg width="8" height="14" viewBox="0 0 8 14"><path d="M8 0V14L0 7Z" fill="#333" /></svg>
      </div>
      <div className="w-[1075px] border border-[#909090] bg-[#f0f0f0]" />
      <div className="w-[75px]" />
      <div className="flex w-[22px] items-center justify-center border border-[#909090] bg-[#eee]">
        <svg width="8" height="14" viewBox="0 0 8 14"><path d="M0 0V14L8 7Z" fill="#333" /></svg>
      </div>
      <div className="flex-1 bg-[#cfcfcf]" />
    </div>
  </div>
);

const Splitter = () => (
  <div className="flex w-[9px] shrink-0 border-l border-[#d4d4d4] bg-[#e2e2e2] pt-[50px]">
    <div className="h-full w-[4px] bg-[#c4c4c4]" />
    <div className="h-full w-[4px] bg-[#dcdcdc]" />
  </div>
);

/* ---------- overlays ---------- */

const DocumentMenu = () => (
  <div className="absolute left-[110px] top-[173px] flex h-[148px] w-[252px] flex-col border border-[#b0b0b0] bg-[#fcfcfc] px-[3px] pt-[3px] text-[#454545] shadow-[3px_5px_8px_rgba(0,0,0,0.500)]">
    <div className="h-[32px] shrink-0 bg-[#dadada] pl-[41px] leading-[35px] tracking-[0.140px]">Generate Documentation</div>
    <div className="ml-[38px] mt-[3px] h-px shrink-0 bg-[#cfcfcf]" />
    <div className="mt-[3px] h-[32px] shrink-0 pl-[41px] leading-[32px] tracking-[0.050px]">Open Document</div>
    <div className="h-[32px] shrink-0 pl-[41px] leading-[33px]">New Document</div>
    <div className="ml-[38px] mt-[2px] h-px shrink-0 bg-[#cfcfcf]" />
    <div className="h-[32px] shrink-0 pl-[41px] pt-[3px] leading-[34px] tracking-[-0.060px]">Diagram Only Report</div>
    <div className="absolute left-[19px] top-[2px] h-[39px] w-[222px] border-2 border-[#ff0000]" />
    <svg className="absolute left-[220px] top-[20px]" width="18" height="30" viewBox="0 0 18 30">
      <path d="M1 2V24L5.500 19.500L9 28L13 26L9.500 18H16Z" fill="#fff" stroke="#222" strokeWidth="1.700" />
    </svg>
  </div>
);

const Captions = () => (
  <div className="absolute left-[445px] top-[681px] flex w-[1014px] flex-col items-center font-['Roboto',sans-serif] text-[46px] leading-[53px] text-white">
    <div className="h-[54px] w-[716px] whitespace-pre bg-[rgba(8,8,8,0.820)] text-center tracking-[0.300px]">So again from the 'Publish' ribbon</div>
    <div className="h-[54px] w-[1014px] whitespace-pre bg-[rgba(8,8,8,0.820)] text-center tracking-[0.300px]">choose 'Document" -  'Generate documentation'.</div>
  </div>
);

const PlayerControls = () => (
  <>
    <div className="absolute bottom-0 left-0 right-0 h-[446px] bg-[linear-gradient(to_bottom,rgba(0,0,0,0)_0px,rgba(0,0,0,0.070)_70px,rgba(0,0,0,0.160)_140px,rgba(0,0,0,0.240)_200px,rgba(0,0,0,0.330)_290px,rgba(0,0,0,0.370)_345px,rgba(0,0,0,0.540)_388px,rgba(0,0,0,0.660)_415px,rgba(0,0,0,0.730)_446px)]" />
    <div className="absolute bottom-0 left-0 right-0 h-[8px] bg-[#141414]" />
    <div className="absolute left-0 right-0 top-[952px] h-[6px] bg-[#ff0000]" />
    <div className="absolute left-[-9px] top-[994px] font-['Roboto',sans-serif] text-[21px] leading-[24px] text-[#ddd]">5</div>
    <div className="absolute left-[1812px] top-[993px] h-[27px] w-[36px] rounded-[13px] bg-[rgba(190,190,190,0.700)]" />
    <svg className="absolute left-[1832px] top-[1015px]" width="10" height="8" viewBox="0 0 10 8"><path d="M0 1H10L5 7Z" fill="#3a3a3a" /></svg>
    <div className="absolute left-[1781px] top-[986px] flex h-[40px] w-[40px] items-center justify-center gap-[4px] rounded-full bg-[#5d5d5d] shadow-[0_0_3px_rgba(60,60,60,0.800)]">
      <div className="h-[18px] w-[6px] bg-[#f2f2f2]" />
      <div className="h-[18px] w-[6px] bg-[#f2f2f2]" />
    </div>
  </>
);

export default function App() {
  return (
    <div className="h-[1134px] w-[1966px] overflow-hidden bg-white p-[36px] font-['Noto_Sans',sans-serif] text-[16px] text-[#454545]">
      <div className="h-[1062px] w-[1894px] rounded-[36px] shadow-[0_2px_38px_rgba(0,0,0,0.420)]">
        <div className="relative h-full w-full overflow-hidden rounded-[36px] bg-black pl-[16px]">
          <div className="flex h-[1054px] w-[1874px] flex-col bg-[#dfdfdf]">
            <TitleBar />
            <Ribbon />
            <div className="flex flex-1">
              <ProjectPanel />
              <Splitter />
              <Toolbox />
              <Splitter />
              <DiagramPanel />
              <div className="flex flex-1 items-start bg-[#e0e0e0] pt-[10px]">
                <span className="ml-[7px] text-[15px] leading-[20px] [writing-mode:vertical-rl]">Start</span>
                <div className="ml-auto h-[37px] w-[8px] bg-[#cccccc]" />
              </div>
            </div>
          </div>
          <DocumentMenu />
          <PlayerControls />
          <Captions />
        </div>
      </div>
    </div>
  );
}
